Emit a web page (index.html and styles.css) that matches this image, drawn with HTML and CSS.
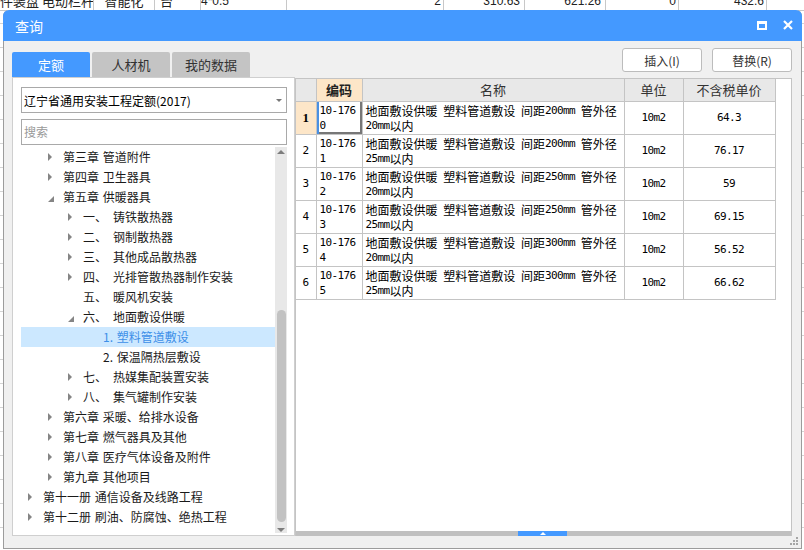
FILE: index.html
```html
<!DOCTYPE html>
<html lang="zh-CN">
<head>
<meta charset="utf-8">
<title>查询</title>
<link rel="stylesheet" href="styles.css">
</head>
<body>
<div class="sheet">
  <div class="srow">
    <div class="sc s1">件装盘 电动栏杆</div>
    <div class="sc s2 ctr">智能化</div>
    <div class="sc s3">台</div>
    <div class="sc s4">4*0.5</div>
    <div class="sc s5 rt">2</div>
    <div class="sc s6 rt">310.63</div>
    <div class="sc s7 rt">621.26</div>
    <div class="sc s8 rt">0</div>
    <div class="sc s9 rt">432.6</div>
    <div class="sc s10"></div>
  </div>
</div>

<div class="dialog">
  <div class="titlebar">
    <span class="title">查询</span>
    <span class="tb-max"></span>
    <svg class="tb-close" width="10" height="10" viewBox="0 0 10 10"><path d="M1 1 L9 9 M9 1 L1 9" stroke="#fff" stroke-width="2.2" fill="none"/></svg>
  </div>

  <div class="main">
    <div class="leftcol">
      <div class="tabs">
        <div class="tab active">定额</div>
        <div class="tab">人材机</div>
        <div class="tab">我的数据</div>
      </div>
      <div class="panel">
        <div class="select"><span class="select-text">辽宁省通用安装工程定额(2017)</span><i class="caret"></i></div>
        <div class="search">搜索</div>
        <div class="tree">
          <div class="nodes">
            <div class="node l1"><i class="tw c"></i><span>第三章 管道附件</span></div>
            <div class="node l1"><i class="tw c"></i><span>第四章 卫生器具</span></div>
            <div class="node l1"><i class="tw e"></i><span>第五章 供暖器具</span></div>
            <div class="node l2"><i class="tw c"></i><span class="num">一、</span><span>铸铁散热器</span></div>
            <div class="node l2"><i class="tw c"></i><span class="num">二、</span><span>钢制散热器</span></div>
            <div class="node l2"><i class="tw c"></i><span class="num">三、</span><span>其他成品散热器</span></div>
            <div class="node l2"><i class="tw c"></i><span class="num">四、</span><span>光排管散热器制作安装</span></div>
            <div class="node l2"><i class="tw"></i><span class="num">五、</span><span>暖风机安装</span></div>
            <div class="node l2"><i class="tw e"></i><span class="num">六、</span><span>地面敷设供暖</span></div>
            <div class="node l3 selected"><i class="tw"></i><span>1. 塑料管道敷设</span></div>
            <div class="node l3"><i class="tw"></i><span>2. 保温隔热层敷设</span></div>
            <div class="node l2"><i class="tw c"></i><span class="num">七、</span><span>热媒集配装置安装</span></div>
            <div class="node l2"><i class="tw c"></i><span class="num">八、</span><span>集气罐制作安装</span></div>
            <div class="node l1"><i class="tw c"></i><span>第六章 采暖、给排水设备</span></div>
            <div class="node l1"><i class="tw c"></i><span>第七章 燃气器具及其他</span></div>
            <div class="node l1"><i class="tw c"></i><span>第八章 医疗气体设备及附件</span></div>
            <div class="node l1"><i class="tw c"></i><span>第九章 其他项目</span></div>
            <div class="node l0"><i class="tw c"></i><span>第十一册 通信设备及线路工程</span></div>
            <div class="node l0"><i class="tw c"></i><span>第十二册 刷油、防腐蚀、绝热工程</span></div>
          </div>
          <div class="vscroll"><i class="up"></i><i class="thumb"></i><i class="down"></i></div>
        </div>
      </div>
    </div>

    <div class="rightcol">
      <div class="btns">
        <button class="btn">插入(I)</button>
        <button class="btn">替换(R)</button>
      </div>
      <div class="grid">
        <div class="gridwrap">
          <table>
            <colgroup><col class="w-num"><col class="w-code"><col class="w-name"><col class="w-unit"><col class="w-price"></colgroup>
            <thead>
              <tr><th class="hnum"></th><th class="hcode">编码</th><th>名称</th><th>单位</th><th>不含税单价</th></tr>
            </thead>
            <tbody>
              <tr><td class="rn cur">1</td><td class="code focus"><span class="m">10-176<br>0</span></td><td class="name">地面敷设供暖 塑料管道敷设 间距<span class="m">200mm</span> 管外径<br><span class="m">20mm</span>以内</td><td class="ctd"><span class="m">10m2</span></td><td class="ctd"><span class="m">64.3</span></td></tr>
              <tr><td class="rn">2</td><td class="code"><span class="m">10-176<br>1</span></td><td class="name">地面敷设供暖 塑料管道敷设 间距<span class="m">200mm</span> 管外径<br><span class="m">25mm</span>以内</td><td class="ctd"><span class="m">10m2</span></td><td class="ctd"><span class="m">76.17</span></td></tr>
              <tr><td class="rn">3</td><td class="code"><span class="m">10-176<br>2</span></td><td class="name">地面敷设供暖 塑料管道敷设 间距<span class="m">250mm</span> 管外径<br><span class="m">20mm</span>以内</td><td class="ctd"><span class="m">10m2</span></td><td class="ctd"><span class="m">59</span></td></tr>
              <tr><td class="rn">4</td><td class="code"><span class="m">10-176<br>3</span></td><td class="name">地面敷设供暖 塑料管道敷设 间距<span class="m">250mm</span> 管外径<br><span class="m">25mm</span>以内</td><td class="ctd"><span class="m">10m2</span></td><td class="ctd"><span class="m">69.15</span></td></tr>
              <tr><td class="rn">5</td><td class="code"><span class="m">10-176<br>4</span></td><td class="name">地面敷设供暖 塑料管道敷设 间距<span class="m">300mm</span> 管外径<br><span class="m">20mm</span>以内</td><td class="ctd"><span class="m">10m2</span></td><td class="ctd"><span class="m">56.52</span></td></tr>
              <tr><td class="rn">6</td><td class="code"><span class="m">10-176<br>5</span></td><td class="name">地面敷设供暖 塑料管道敷设 间距<span class="m">300mm</span> 管外径<br><span class="m">25mm</span>以内</td><td class="ctd"><span class="m">10m2</span></td><td class="ctd"><span class="m">66.62</span></td></tr>
            </tbody>
          </table>
        </div>
        <div class="hbar"><span class="hthumb"><i class="hup"></i></span></div>
      </div>
    </div>
  </div>
  <div class="footer"></div>
  <svg class="grip" width="8" height="8" viewBox="0 0 8 8">
    <rect x="6" y="0" width="2" height="2" fill="#a6a6a6"/>
    <rect x="3" y="3" width="2" height="2" fill="#a6a6a6"/>
    <rect x="6" y="3" width="2" height="2" fill="#a6a6a6"/>
    <rect x="0" y="6" width="2" height="2" fill="#a6a6a6"/>
    <rect x="3" y="6" width="2" height="2" fill="#a6a6a6"/>
    <rect x="6" y="6" width="2" height="2" fill="#a6a6a6"/>
  </svg>
</div>
</body>
</html>
```

FILE: styles.css
```css
* { box-sizing: border-box; }
html, body { margin: 0; padding: 0; }
body {
  width: 804px;
  height: 550px;
  overflow: hidden;
  position: relative;
  background: #fff repeating-linear-gradient(to bottom, transparent 0, transparent 23px, #d4d4d4 23px, #d4d4d4 24px);
  font-family: "Noto Sans CJK SC", "Liberation Sans", sans-serif;
  color: #1a1a1a;
}

/* background spreadsheet */
.sheet { width: 804px; }
.srow {
  display: flex;
  margin-top: -8px;
  height: 19px;
  background: #fff;
  border-bottom: 1px solid #c8c8c8;
  font-size: 13px;
  line-height: 18px;
  color: #222;
}
.sc { border-right: 1px solid #c8c8c8; white-space: nowrap; overflow: hidden; padding: 0 2px; }
.sc.ctr { text-align: center; }
.sc.rt { text-align: right; font-family: "Liberation Sans", sans-serif; font-size: 12px; }
.s1 { width: 94px; padding-left: 0; }
.s2 { width: 61px; }
.s3 { width: 46px; padding-left: 5px; }
.s4 { width: 86px; padding-left: 0; font-family: "Liberation Sans", sans-serif; font-size: 12px; }
.s5 { width: 157px; }
.s6 { width: 81px; padding-right: 4px; }
.s7 { width: 81px; padding-right: 4px; }
.s8 { width: 73px; }
.s9 { width: 88px; }
.s10 { flex: 1; border-right: 0; }

/* dialog window */
.dialog {
  position: absolute;
  left: 3px;
  top: 10px;
  width: 799px;
  height: 539px;
  background: #f0f0f0;
  border: 1px solid #9c9c9c;
  border-top: 0;
  border-radius: 6px 6px 0 0;
  display: flex;
  flex-direction: column;
}
.titlebar {
  height: 31px;
  margin: 0 -1px;
  background: #4499ff;
  border-radius: 6px 6px 0 0;
  display: flex;
  align-items: center;
  padding: 0 9px 0 12px;
  color: #fff;
}
.title { font-size: 14px; line-height: 20px; flex: 1; margin-top: 1px; }
.tb-max {
  width: 10px;
  height: 9px;
  border: 2px solid #fff;
  border-top-width: 3px;
  margin-right: 16px;
  margin-top: -1px;
}
.tb-close { display: block; margin-top: -1px; }

.main {
  flex: 1;
  display: flex;
  padding: 7px 9px 0 8px;
  min-height: 0;
}

/* left column */
.leftcol {
  width: 283px;
  display: flex;
  flex-direction: column;
}
.tabs {
  margin-top: 4px;
  height: 25px;
  display: flex;
  gap: 2px;
}
.tab {
  width: 78px;
  height: 25px;
  background: #c4c4c4;
  color: #333;
  border-radius: 2px 2px 0 0;
  font-size: 13px;
  line-height: 25px;
  text-align: center;
}
.tab.active { background: #4499ff; color: #fff; }

.panel {
  flex: 1;
  background: #fff;
  border: 1px solid #cfcfcf;
  padding: 9px 7px 2px 8px;
  display: flex;
  flex-direction: column;
  min-height: 0;
}
.select {
  height: 26px;
  border: 1px solid #a9a9a9;
  display: flex;
  align-items: center;
  padding: 0 4px 0 2px;
  font-size: 12px;
  color: #000;
}
.select-text { flex: 1; }
.caret {
  width: 0;
  height: 0;
  border-left: 3px solid transparent;
  border-right: 3px solid transparent;
  border-top: 3px solid #777;
}
.search {
  margin-top: 6px;
  height: 26px;
  border: 1px solid #a9a9a9;
  padding-left: 2px;
  font-size: 12px;
  line-height: 24px;
  color: #999;
}
.tree {
  flex: 1;
  margin-top: 2px;
  display: flex;
  min-height: 0;
}
.nodes { flex: 1; overflow: hidden; }
.node {
  height: 20px;
  display: flex;
  align-items: center;
  font-size: 12px;
  line-height: 20px;
  color: #1a1a1a;
  white-space: nowrap;
  word-spacing: 1px;
}
.node.l0 { padding-left: 7px; }
.node.l1 { padding-left: 27px; }
.node.l2 { padding-left: 47px; }
.node.l3 { padding-left: 67px; }
.node.selected { background: #cce8ff; color: #3d8fe8; }
.tw { width: 15px; height: 20px; display: flex; align-items: center; flex: none; }
.tw.c::before {
  content: "";
  width: 0;
  height: 0;
  border-left: 4px solid #858585;
  border-top: 4px solid transparent;
  border-bottom: 4px solid transparent;
}
.tw.e::before {
  content: "";
  width: 0;
  height: 0;
  margin-top: 3px;
  border-bottom: 6px solid #858585;
  border-left: 6px solid transparent;
}
.num { width: 30px; flex: none; }

.vscroll {
  width: 12px;
  background: #e8e8e8;
  display: flex;
  flex-direction: column;
  align-items: center;
}
.vscroll .up {
  margin-top: 3px;
  width: 0;
  height: 0;
  border-left: 4px solid transparent;
  border-right: 4px solid transparent;
  border-bottom: 4px solid #7d7d7d;
}
.vscroll .thumb {
  margin-top: 156px;
  width: 9px;
  height: 212px;
  border-radius: 5px;
  background: #c2c2c2;
}
.vscroll .down {
  margin-top: 6px;
  width: 0;
  height: 0;
  border-left: 4px solid transparent;
  border-right: 4px solid transparent;
  border-top: 4px solid #7d7d7d;
}

/* right column */
.rightcol {
  flex: 1;
  display: flex;
  flex-direction: column;
  min-width: 0;
}
.btns {
  height: 24px;
  display: flex;
  justify-content: flex-end;
  gap: 10px;
}
.btn {
  width: 80px;
  height: 24px;
  margin: 0;
  padding: 0;
  background: #fff;
  border: 1px solid #bcbcbc;
  border-radius: 3px;
  font-family: "Noto Sans CJK SC", "Liberation Sans", sans-serif;
  font-size: 12px;
  color: #333;
}
.grid {
  flex: 1;
  margin-top: 6px;
  background: #fff;
  border: 1px solid #c4c4c4;
  border-bottom: 0;
  display: flex;
  flex-direction: column;
  min-height: 0;
}
.gridwrap { flex: 1; overflow: hidden; }
table {
  border-collapse: collapse;
  table-layout: fixed;
  width: 479px;
}
.w-num { width: 20px; }
.w-code { width: 46px; }
.w-name { width: 262px; }
.w-unit { width: 59px; }
.w-price { width: 92px; }
th, td {
  border: 1px solid #c4c4c4;
  padding: 0;
}
th:first-child, td:first-child { border-left: 0; }
thead th { border-top: 0; }
th {
  height: 22px;
  background: #e8e8e8;
  font-weight: normal;
  font-size: 13px;
  line-height: 20px;
  color: #333;
  text-align: center;
}
th.hcode { background: #fde6c8; font-weight: bold; color: #222; }
td {
  height: 33px;
  font-size: 12px;
  line-height: 15px;
  color: #000;
  vertical-align: top;
}
td.rn {
  text-align: center;
  vertical-align: middle;
  font-family: "DejaVu Sans Mono", monospace;
  font-size: 11px;
}
td.rn.cur { background: #fde6c8; font-weight: bold; font-family: "Liberation Serif", serif; font-size: 13px; }
td.code { padding: 1px 0 0 3px; }
td.code.focus { box-shadow: inset 2px 0 0 #4a90e2, inset -2px -2px 0 #777; }
td.name { padding: 1px 0 0 3px; word-spacing: 3px; white-space: nowrap; }
td.ctd { text-align: center; vertical-align: middle; }
.m {
  font-family: "DejaVu Sans Mono", monospace;
  font-size: 11px;
  letter-spacing: -0.6px;
  word-spacing: 0;
  vertical-align: top;
}
.hbar {
  height: 5px;
  background: #c0c0c0;
  display: flex;
  flex: none;
}
.hthumb {
  margin-left: 222px;
  width: 49px;
  height: 5px;
  background: #4499ff;
  display: flex;
  justify-content: center;
  align-items: center;
}
.hup {
  width: 0;
  height: 0;
  border-left: 3px solid transparent;
  border-right: 3px solid transparent;
  border-bottom: 3px solid #fff;
}

.footer { height: 12px; flex: none; }
.grip { position: absolute; right: 3px; bottom: 3px; display: block; }
```
